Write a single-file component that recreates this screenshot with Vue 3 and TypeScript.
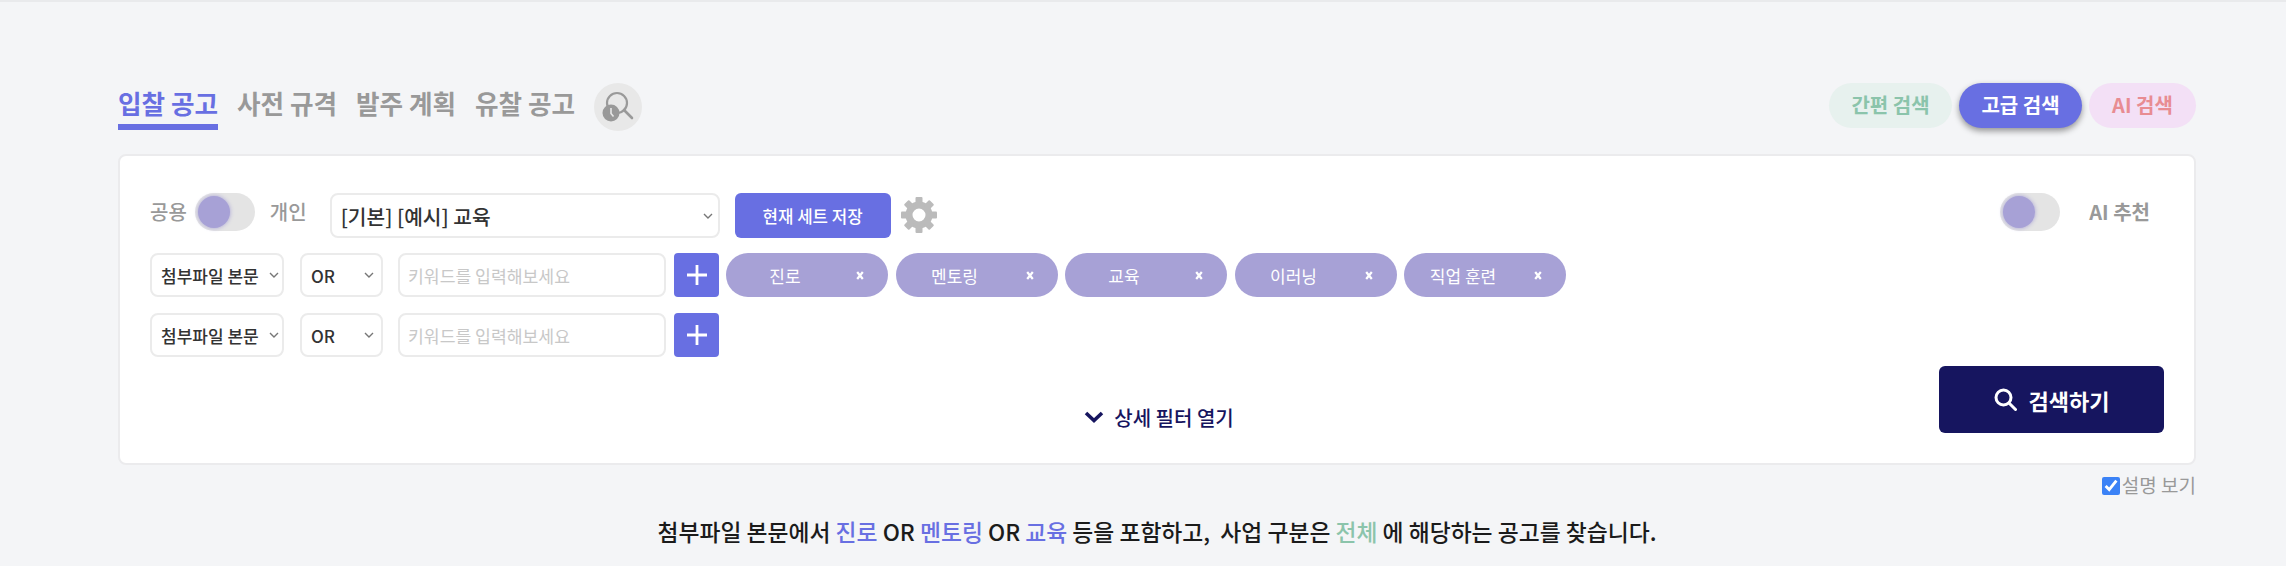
<script setup lang="ts">
const tabs: string[] = ['입찰 공고', '사전 규격', '발주 계획', '유찰 공고']
const chips: string[] = ['진로', '멘토링', '교육', '이러닝', '직업 훈련']
const teeth: number[] = [0, 45, 90, 135, 180, 225, 270, 315]
</script>

<template>
  <div class="page">
    <header class="head">
      <nav class="tabs">
        <a v-for="(t, i) in tabs" :key="t" class="tab" :class="{ on: i === 0 }">{{ t }}</a>
        <span class="history">
          <svg width="48" height="48" viewBox="0 0 48 48">
            <circle cx="23" cy="20" r="10" fill="none" stroke="#999" stroke-width="2.2" />
            <path d="M30 27l8 8" stroke="#999" stroke-width="2.6" stroke-linecap="round" />
            <circle cx="17" cy="30" r="8.5" fill="#999" />
            <path d="M17 25v5.5l2.5 3" fill="none" stroke="#e8e8e8" stroke-width="1.6" />
          </svg>
        </span>
      </nav>
      <div class="modes">
        <span class="mode simple">간편 검색</span>
        <span class="mode adv">고급 검색</span>
        <span class="mode ai">AI 검색</span>
      </div>
    </header>

    <section class="card">
      <div class="row first">
        <span class="lab l1">공용</span>
        <span class="toggle"><i></i></span>
        <span class="lab l2">개인</span>
        <span class="sel-wrap set">
          <select class="sel"><option>[기본] [예시] 교육</option></select>
          <svg class="chev" width="10" height="6" viewBox="0 0 10 6"><path d="M1 1l4 4 4-4" fill="none" stroke="#777" stroke-width="1.4" /></svg>
        </span>
        <button class="save">현재 세트 저장</button>
        <svg class="gear" width="38" height="38" viewBox="0 0 38 38">
          <circle cx="19" cy="19" r="10" fill="none" stroke="#bbb" stroke-width="7" />
          <rect v-for="d in teeth" :key="d" x="15.5" y="1" width="7" height="8" rx="1" fill="#bbb" :transform="`rotate(${d} 19 19)`" />
        </svg>
        <span class="toggle ai-t"><i></i></span>
        <span class="ai-lab">AI 추천</span>
      </div>

      <div class="row kw">
        <span class="sel-wrap field">
          <select class="sel"><option>첨부파일 본문</option></select>
          <svg class="chev" width="10" height="6" viewBox="0 0 10 6"><path d="M1 1l4 4 4-4" fill="none" stroke="#777" stroke-width="1.4" /></svg>
        </span>
        <span class="sel-wrap op">
          <select class="sel"><option>OR</option></select>
          <svg class="chev" width="10" height="6" viewBox="0 0 10 6"><path d="M1 1l4 4 4-4" fill="none" stroke="#777" stroke-width="1.4" /></svg>
        </span>
        <input class="inp" placeholder="키워드를 입력해보세요" />
        <button class="plus">
          <svg width="22" height="22" viewBox="0 0 22 22"><path d="M11 1v20M1 11h20" stroke="#fff" stroke-width="2.8" /></svg>
        </button>
        <span class="chips">
          <span v-for="c in chips" :key="c" class="chip">
            <span class="chip-t">{{ c }}</span>
            <svg class="chip-x" width="8" height="9" viewBox="0 0 8 9"><path d="M1.2 1l5.6 7M6.8 1L1.2 8" stroke="#fff" stroke-width="2.2" /></svg>
          </span>
        </span>
      </div>

      <div class="row kw second">
        <span class="sel-wrap field">
          <select class="sel"><option>첨부파일 본문</option></select>
          <svg class="chev" width="10" height="6" viewBox="0 0 10 6"><path d="M1 1l4 4 4-4" fill="none" stroke="#777" stroke-width="1.4" /></svg>
        </span>
        <span class="sel-wrap op">
          <select class="sel"><option>OR</option></select>
          <svg class="chev" width="10" height="6" viewBox="0 0 10 6"><path d="M1 1l4 4 4-4" fill="none" stroke="#777" stroke-width="1.4" /></svg>
        </span>
        <input class="inp" placeholder="키워드를 입력해보세요" />
        <button class="plus">
          <svg width="22" height="22" viewBox="0 0 22 22"><path d="M11 1v20M1 11h20" stroke="#fff" stroke-width="2.8" /></svg>
        </button>
      </div>

      <div class="foot">
        <span></span>
        <a class="more">
          <svg width="20" height="14" viewBox="0 0 20 14"><path d="M2 3l8 7.5L18 3" fill="none" stroke="#16155f" stroke-width="3.6" /></svg>
          상세 필터 열기
        </a>
        <button class="go">
          <svg width="23" height="23" viewBox="0 0 23 23"><circle cx="9.5" cy="9.5" r="7.5" fill="none" stroke="#fff" stroke-width="3" /><path d="M15 15l6.5 6.5" stroke="#fff" stroke-width="3" stroke-linecap="round" /></svg>
          검색하기
        </button>
      </div>
    </section>

    <label class="explain"><input type="checkbox" checked />설명 보기</label>

    <p class="desc">
      첨부파일 본문에서 <b>진로</b> OR <b>멘토링</b> OR <b>교육</b> 등을 포함하고,&nbsp; 사업 구분은 <em>전체</em> 에 해당하는 공고를 찾습니다.
    </p>
  </div>
</template>

<style>
html, body { margin: 0; background: #f4f5f7; }
</style>

<style scoped>
.page {
  box-sizing: border-box;
  height: 566px;
  overflow: hidden;
  padding: 81px 90px 0 118px;
  border-top: 2px solid #e9eaec;
  background: #f4f5f7;
  font-family: "Noto Sans CJK KR", "Noto Sans", sans-serif;
  color: #333;
}
.head { display: flex; justify-content: space-between; align-items: flex-start; height: 48px; }
.tabs { display: flex; gap: 19px; }
.tab {
  display: block;
  height: 47px;
  line-height: 40px;
  font-size: 25.6px;
  font-weight: 700;
  color: #999;
  white-space: nowrap;
  box-sizing: border-box;
}
.tab.on { color: #686fe2; border-bottom: 6px solid #686fe2; }
.history { display: block; width: 48px; height: 48px; border-radius: 50%; background: #e8e8e8; }
.modes { display: flex; gap: 7px; }
.mode {
  height: 45px;
  line-height: 44px;
  border-radius: 23px;
  font-size: 20px;
  font-weight: 700;
  text-align: center;
}
.simple { width: 123px; background: #e7f1ee; color: #8bc4ab; }
.adv { width: 123px; background: #686fe2; color: #fff; box-shadow: 0 3px 6px rgba(0, 0, 0, 0.4); }
.ai { width: 107px; background: #f3e0f6; color: #e88c92; }

.card {
  box-sizing: border-box;
  height: 311px;
  margin-top: 23px;
  padding: 37px 30px 0 30px;
  background: #fff;
  border: 2px solid #ebebed;
  border-radius: 8px;
}
.row { display: flex; align-items: flex-start; }
.first { height: 45px; }
.lab { font-size: 20px; font-weight: 500; color: #999; line-height: 38px; white-space: nowrap; }
.toggle {
  display: block;
  flex: none;
  box-sizing: border-box;
  width: 60px;
  height: 38px;
  padding: 3px;
  border-radius: 19px;
  background: #e4e4e4;
}
.toggle i {
  display: block;
  width: 32px;
  height: 32px;
  border-radius: 50%;
  background: #a7a1d6;
  box-shadow: 0 0 4px #a7a1d6;
}
.l1 { margin-right: 8px; }
.l2 { margin-left: 15px; margin-right: 23px; }
.sel-wrap { position: relative; display: block; flex: none; height: 44px; }
.sel {
  display: block;
  box-sizing: border-box;
  width: 100%;
  height: 100%;
  appearance: none;
  border: 2px solid #ebebeb;
  border-radius: 8px;
  background: #fff;
  font-family: inherit;
  font-size: 17px;
  font-weight: 500;
  color: #333;
  padding: 0 0 0 9px;
  outline: none;
}
.chev { position: absolute; right: 5px; top: 50%; margin-top: -3px; pointer-events: none; }
.set { width: 390px; height: 45px; }
.set .sel { font-size: 20.3px; }
.set .chev { right: 7px; }
.save {
  box-sizing: border-box;
  flex: none;
  width: 156px;
  height: 45px;
  margin-left: 15px;
  border: 0;
  border-radius: 6px;
  background: #686fe2;
  color: #fff;
  font-family: inherit;
  font-size: 16.8px;
  font-weight: 500;
  padding: 0;
}
.gear { margin: 3px 0 0 9px; flex: none; }
.ai-t { margin-left: auto; }
.ai-lab { margin: 0 14px 0 29px; font-size: 20px; font-weight: 700; color: #999; line-height: 38px; white-space: nowrap; }

.kw { margin-top: 15px; height: 44px; }
.second { margin-top: 16px; }
.field { width: 134px; }
.op { width: 83px; margin-left: 16px; }
.op .chev { right: 9px; }
.inp {
  box-sizing: border-box;
  flex: none;
  width: 268px;
  height: 44px;
  margin-left: 15px;
  padding: 0 8px;
  border: 2px solid #ebebeb;
  border-radius: 8px;
  font-family: inherit;
  font-size: 17.2px;
  outline: none;
  background: #fff;
}
.inp::placeholder { color: #c8c8c8; }
.plus {
  display: flex;
  flex: none;
  align-items: center;
  justify-content: center;
  width: 45px;
  height: 44px;
  margin-left: 8px;
  padding: 0;
  border: 0;
  border-radius: 4px;
  background: #686fe2;
}
.chips { display: flex; gap: 7.5px; margin-left: 7px; }
.chip {
  display: flex;
  align-items: center;
  box-sizing: border-box;
  width: 162px;
  height: 44px;
  border-radius: 22px;
  background: #a7a1d6;
  color: #fff;
  font-size: 17px;
}
.chip-t { width: 118px; text-align: center; white-space: nowrap; }
.chip-x { margin-left: 12px; }

.foot {
  display: grid;
  grid-template-columns: 1fr auto 1fr;
  align-items: end;
  margin-top: 9px;
  height: 67px;
}
.more {
  display: flex;
  align-items: center;
  gap: 10px;
  height: 30px;
  margin: 0 0 1px 4px;
  font-size: 20px;
  font-weight: 500;
  color: #16155f;
  white-space: nowrap;
}
.go {
  display: flex;
  justify-self: end;
  align-items: center;
  justify-content: center;
  gap: 12px;
  box-sizing: border-box;
  width: 225px;
  height: 67px;
  padding: 0;
  border: 0;
  border-radius: 6px;
  background: #16155f;
  color: #fff;
  font-family: inherit;
  font-size: 22px;
  font-weight: 700;
}

.explain {
  display: flex;
  align-items: center;
  justify-content: flex-end;
  height: 28px;
  margin-top: 5px;
  font-size: 19px;
  color: #999;
  white-space: nowrap;
}
.explain input { width: 18px; height: 18px; margin: 4px 2px 0 0; accent-color: #3b82f6; }
.desc {
  margin: 18px 0 0;
  text-align: center;
  font-size: 22.8px;
  font-weight: 500;
  line-height: 32px;
  color: #1b1b1b;
}
.desc b { font-weight: 500; color: #686fe2; }
.desc em { font-style: normal; color: #8bc4ab; }
</style>
